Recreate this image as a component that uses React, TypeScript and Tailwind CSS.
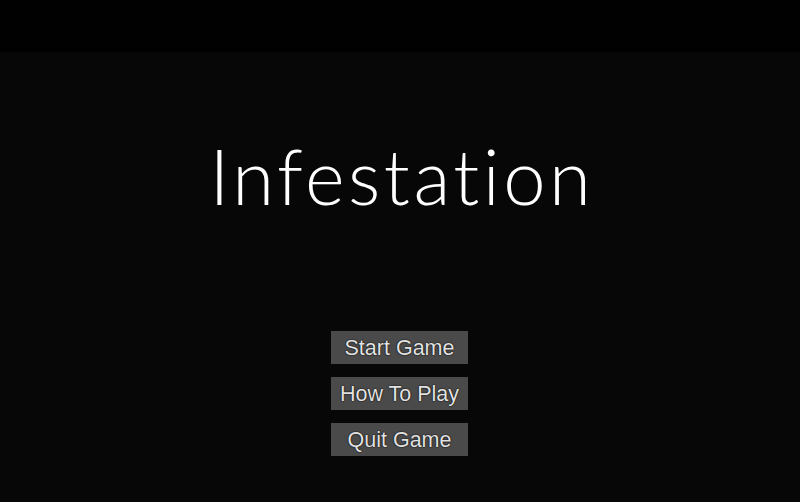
const buttons = ["Start Game", "How To Play", "Quit Game"];

export default function App() {
  return (
    <div className="w-[800px] h-[502px] bg-[#070707] flex flex-col overflow-hidden">
      <div className="h-[52px] bg-[#010101] shrink-0" />
      <div className="flex flex-col items-center">
        <h1 className="mt-[84px] h-[80px] leading-[80px] pl-[4px] text-white text-[76px] font-light tracking-[3.5px] font-['Lato',sans-serif]">
          Infestation
        </h1>
        <div className="mt-[115px] mr-[1px] flex flex-col gap-[13px]">
          {buttons.map((label) => (
            <button
              key={label}
              className="w-[137px] h-[33px] bg-[#4a4a4a] text-[#e2e2e2] text-[21.5px] leading-[34px] font-['Liberation_Sans',sans-serif] [text-shadow:0_0_1.5px_#000,0_0_1px_#000]"
            >
              {label}
            </button>
          ))}
        </div>
      </div>
    </div>
  );
}
